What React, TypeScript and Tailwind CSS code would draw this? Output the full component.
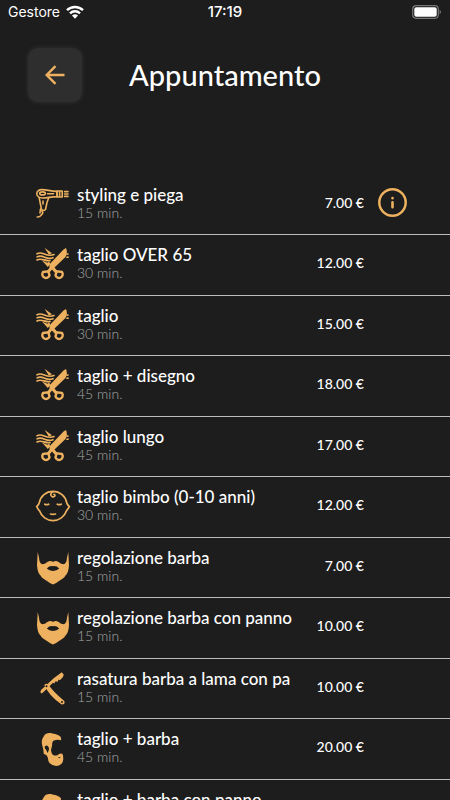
import type { ReactNode } from 'react';

type IconName = 'dryer' | 'scissors' | 'baby' | 'beard' | 'razor' | 'head';

interface Service {
  name: string;
  minutes: number;
  price: string;
  icon: IconName;
  info?: boolean;
}

const services: Service[] = [
  { name: 'styling e piega', minutes: 15, price: '7.00 €', icon: 'dryer', info: true },
  { name: 'taglio OVER 65', minutes: 30, price: '12.00 €', icon: 'scissors' },
  { name: 'taglio', minutes: 30, price: '15.00 €', icon: 'scissors' },
  { name: 'taglio + disegno', minutes: 45, price: '18.00 €', icon: 'scissors' },
  { name: 'taglio lungo', minutes: 45, price: '17.00 €', icon: 'scissors' },
  { name: 'taglio bimbo (0-10 anni)', minutes: 30, price: '12.00 €', icon: 'baby' },
  { name: 'regolazione barba', minutes: 15, price: '7.00 €', icon: 'beard' },
  { name: 'regolazione barba con panno', minutes: 15, price: '10.00 €', icon: 'beard' },
  { name: 'rasatura barba a lama con pa', minutes: 15, price: '10.00 €', icon: 'razor' },
  { name: 'taglio + barba', minutes: 45, price: '20.00 €', icon: 'head' },
  { name: 'taglio + barba con panno', minutes: 45, price: '23.00 €', icon: 'head' },
];

const drawings: Record<IconName, ReactNode> = {
  dryer: (
    <g fill="none" stroke="currentColor" strokeWidth="1.6" strokeLinejoin="round" strokeLinecap="round">
      <path d="M7 2.6C3.500 2.600 1.800 4.600 1.800 6.800S4 11 7.500 11C13 11 15 9.800 22 9.600V4.400C15 4.200 12 2.600 7 2.600Z" />
      <path d="M22 4h5.200v6H22zM24.600 4v6" />
      <ellipse cx="7.500" cy="6.400" rx="2.800" ry="1.500" />
      <path d="M12.500 6.800h6" />
      <path d="M4.200 10.800 6.500 22.500Q8.500 24.500 10.500 22.500L12 15.500 13.800 10.500" />
      <path d="M8 14v3M7 24C9 27 6.800 27 6 28.300 5 30 3.500 30 2.200 30M5.500 22 5 26" />
      <path d="M29.600 4.600h3.400M29.600 7h3.400M29.600 9.400h3.400" />
    </g>
  ),
  scissors: (
    <g fill="currentColor">
      <path d="M28.500 2.500 31 1Q33 5.500 30.500 10L19.500 20.500 22.800 24.500 20.500 26.500 17 22.500 13.700 26.500 11.500 24.500 14.500 20.800Q14 18 15.500 16.300Z" />
      <path d="M9.500 .8 17 6.300 13.800 7.500Z M7 13.500 12.500 15.700 14 14.500 15.500 17 12.800 20Z" />
      <g fill="none" stroke="currentColor" strokeWidth="1.600" strokeLinecap="round">
        <path d="M2 6.800C8 3.500 10.500 10.700 19 7.600M2 9.900C8 6.600 11 13.700 18 10.700M2 13C6.500 10.200 10 14.600 15 13.600M32 7.200 33 7M32 10.300 33 10.100" />
      </g>
      <g fill="none" stroke="currentColor" strokeWidth="2.400">
        <path d="M8 25 13.300 24.300 14.500 28.300A3.700 3.700 0 1 1 8 25Z" />
        <path d="M27 25 21.700 24.300 20.500 28.300A3.700 3.700 0 1 0 27 25Z" />
      </g>
    </g>
  ),
  baby: (
    <g fill="none" stroke="currentColor" strokeWidth="1.700" strokeLinecap="round">
      <path d="M4.200 14A14 14 0 0 1 31.800 14Q32 15.200 34.300 17.700 32.500 20.500 31.500 21.800A14.200 14.200 0 0 1 4.500 21.800Q3.200 20.500 1.700 17.700 4 15.200 4.200 14Z" />
      <path d="M18 2.800Q15.200 4 16 6.300 17.500 9 19.700 7.200 20.300 6 19 5.300M9.800 15.200Q11.800 16.200 13.700 15.200M22.300 15.200Q24.200 16.200 26.200 15.200M15.500 25Q18 25.600 20.500 25" />
    </g>
  ),
  beard: (
    <path
      fill="currentColor"
      fillRule="evenodd"
      d="M2.700 2 4 7.500Q4.300 13.500 7.200 14.200C11 14.200 12.500 11 15 11Q17 11 18 12 19 11 21 11C23.500 11 25 14.200 28.800 14.200Q31.700 13.500 32 7.500L33.300 2 34 15Q33.500 23 30.500 25.500C29 28.500 26 29.500 24 31Q21 33.500 18 34.500 15 33.500 12 31C10 29.500 7 28.500 5.500 25.500Q2.500 23 2 15ZM11.800 18.500Q14 20.800 18 21 22 20.800 24.200 18.500 21.500 15.600 18 16.200 14.500 15.600 11.800 18.500Z"
    />
  ),
  razor: (
    <g fill="currentColor">
      <path d="M19 7 26.800 1.200 28.800 3.800 27.800 6.300 24.800 9.200 23.600 8.600 22.500 10.700 20.300 10.500 19.400 12.500 18 11.700 8 21.500 6.300 22.500 5.300 21 6.300 18.800Z" />
      <path d="M9.300 14Q11 12 13.200 13.200 17.500 20 29.300 30 30.500 33.500 26.700 33.500 14 25 9.300 14Z" />
      <circle cx="11.500" cy="15.300" r="1" fill="#1d1d1d" />
      <circle cx="27" cy="31" r="1" fill="#1d1d1d" />
    </g>
  ),
  head: (
    <path
      fill="currentColor"
      fillRule="evenodd"
      d="M9 5C10.500 2 14 1.500 17.500 2.500Q23 3 25.800 6L26.200 9.200Q22 8 19 9.500C16.500 11 17.500 13.800 17 15L16 19Q16.500 23.500 19 24.500 22.500 25 24 23 27 21.800 28 24L28.300 28Q28 33 24 34.500 18.500 36 14.500 32 13 30 12.800 26.500L11.500 24.300 8.700 22.800Q8.500 18 7.500 15.500 5.500 9 9 5ZM9.500 16Q12 13 13.800 16.500 14.500 20 12.300 22L11.300 19Q10 18 9.500 16ZM23 26 26 26.500 24 27.300Z"
    />
  ),
};

function ServiceIcon({ name }: { name: IconName }) {
  return (
    <svg viewBox="0 0 36 36" className="size-9 shrink-0 text-[#edb15f]" aria-hidden="true">
      {drawings[name]}
    </svg>
  );
}

function StatusBar() {
  return (
    <div className="grid h-6 grid-cols-3 items-center px-2 font-['Inter',sans-serif] text-sm text-white">
      <div className="flex items-center gap-1.5">
        <span>Gestore</span>
        <svg viewBox="0 0 18 14" className="h-3.5 w-[18px]" aria-label="Wi-Fi">
          <g fill="none" stroke="currentColor" strokeWidth="2.400">
            <path d="M1 5.200A11.500 11.500 0 0 1 17 5.200M4 8.300A7.200 7.200 0 0 1 14 8.300" />
          </g>
          <path d="M6 10.600A4.400 4.400 0 0 1 12 10.600L9 13.700Z" fill="currentColor" />
        </svg>
      </div>
      <time className="text-center text-[15px] font-medium">17:19</time>
      <svg viewBox="0 0 30 14" className="h-3.5 w-[30px] justify-self-end" aria-label="Batteria">
        <rect x="0.700" y="0.700" width="25.600" height="12.600" rx="3.500" fill="none" stroke="#777" strokeWidth="1.200" />
        <rect x="2.300" y="2.300" width="22.400" height="9.400" rx="2" fill="#fff" />
        <path d="M27.600 4.800Q29 5.500 29 7T27.600 9.200Z" fill="#777" />
      </svg>
    </div>
  );
}

function ServiceRow({ service }: { service: Service }) {
  return (
    <li className="flex h-[60px] shrink-0 items-center border-b border-[#bcbcbc] pr-10 pl-[35px] even:h-[61px]">
      <ServiceIcon name={service.icon} />
      <div className="ml-1.5 min-w-0 flex-1 pb-1 whitespace-nowrap">
        <h2 className="text-[17px] leading-5 font-medium text-white">{service.name}</h2>
        <p className="text-sm leading-4 font-light text-[#a3a7a7]">{service.minutes} min.</p>
      </div>
      <span className="pb-1 text-sm font-medium whitespace-nowrap text-white">{service.price}</span>
      <div className="ml-3 flex w-[34px] shrink-0 justify-center pb-1">
        {service.info && (
          <button type="button" aria-label="Informazioni" className="text-[#edb15f]">
            <svg viewBox="0 0 30 30" className="size-[30px]" aria-hidden="true">
              <circle cx="14.500" cy="14.500" r="13.200" fill="none" stroke="currentColor" strokeWidth="2.500" />
              <path d="M14.500 14.300v5M14.500 10v.2" stroke="currentColor" strokeWidth="2.600" strokeLinecap="round" />
            </svg>
          </button>
        )}
      </div>
    </li>
  );
}

export default function App() {
  return (
    <div className="flex h-screen flex-col overflow-hidden bg-[#1d1d1d] font-['Lato',sans-serif]">
      <StatusBar />
      <header className="grid h-[151px] shrink-0 grid-cols-[54px_1fr_54px] items-start px-7 pt-6">
        <button
          type="button"
          aria-label="Indietro"
          className="flex size-[54px] items-center justify-center rounded-[10px] bg-[#2e2e2e] text-[#edb15f] shadow-[0_0_5px_#333333]"
        >
          <svg viewBox="0 0 20 20" className="size-5" fill="none" stroke="currentColor" strokeWidth="2.400" aria-hidden="true">
            <path d="M19.500 10H2M10.500 1.200 1.700 10 10.500 18.800" />
          </svg>
        </button>
        <h1 className="text-center text-[29px] leading-[54px] font-medium text-white">Appuntamento</h1>
      </header>
      <ul className="flex min-h-0 flex-1 flex-col overflow-y-auto [scrollbar-width:none]">
        {services.map((service) => (
          <ServiceRow key={service.name} service={service} />
        ))}
      </ul>
    </div>
  );
}
